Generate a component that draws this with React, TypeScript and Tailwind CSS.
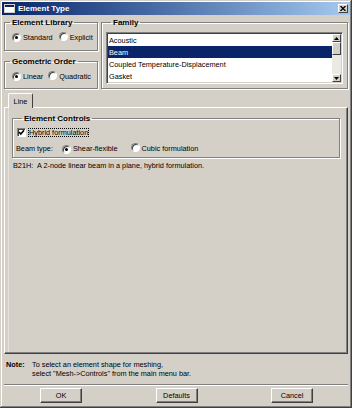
import React from 'react';

const Radio = ({ checked }: { checked?: boolean }) => (
  <span className="inline-flex w-[9px] h-[9px] shrink-0 items-center justify-center rounded-full bg-white border border-t-[#808080] border-l-[#808080] border-r-white border-b-white shadow-[inset_1px_1px_0_#404040]">
    {checked && <span className="w-[3px] h-[3px] rounded-full bg-black" />}
  </span>
);

const Checkbox = () => (
  <span className="inline-flex w-[9px] h-[9px] shrink-0 items-center justify-center bg-white border border-t-[#808080] border-l-[#808080] border-r-white border-b-white shadow-[inset_1px_1px_0_#404040]">
    <svg width="7" height="7" viewBox="0 0 7 7">
      <path d="M1 3 L2.8 5 L6 1.2" stroke="black" strokeWidth="1.6" fill="none" />
    </svg>
  </span>
);

const Group = ({ title, className, children }: { title: string; className?: string; children?: React.ReactNode }) => (
  <fieldset className={`border border-[#808080] shadow-[inset_1px_1px_0_#fff,1px_1px_0_#fff] ${className ?? ''}`}>
    <legend className="ml-[5px] px-[2px] font-bold text-[8px] leading-[9px]">{title}</legend>
    {children}
  </fieldset>
);

const Button = ({ label }: { label: string }) => (
  <button className="w-[42px] h-[15px] flex items-center justify-center bg-[#d4d0c8] border border-t-white border-l-white border-r-[#404040] border-b-[#404040] shadow-[inset_-1px_-1px_0_#808080] leading-[9px]">
    {label}
  </button>
);

const families = ['Acoustic', 'Beam', 'Coupled Temperature-Displacement', 'Gasket'];

export default function App() {
  return (
    <div className="w-[352px] h-[408px] p-[2px] flex flex-col bg-[#d4d0c8] text-black text-[7.3px] leading-[9px] font-['Liberation_Sans',Arial,sans-serif] shadow-[inset_-1px_-1px_0_#404040,inset_1px_1px_0_#d4d0c8,inset_-2px_-2px_0_#808080,inset_2px_2px_0_#ffffff]">
      {/* title bar */}
      <div className="h-[13px] flex items-center bg-gradient-to-r from-[#0a246a] to-[#a6caf0] px-[1px]">
        <svg width="11" height="9" viewBox="0 0 11 9" className="ml-[1px]">
          <rect x="0.5" y="0.5" width="10" height="8" fill="#fff" stroke="#d4d0c8" />
          <rect x="1" y="1" width="9" height="2" fill="#0a246a" />
        </svg>
        <span className="ml-[3px] text-white font-bold text-[8px]">Element Type</span>
        <span className="ml-auto mr-[1px] w-[10px] h-[9px] flex items-center justify-center bg-[#d4d0c8] border border-t-white border-l-white border-r-[#404040] border-b-[#404040]">
          <svg width="6" height="5" viewBox="0 0 6 5">
            <path d="M0.5 0 L5.5 5 M5.5 0 L0.5 5" stroke="black" strokeWidth="1.3" />
          </svg>
        </span>
      </div>

      <div className="flex-1 flex flex-col px-[2px]">
        {/* top row */}
        <div className="flex gap-[3px] mt-[3px]">
          <div className="w-[94px] flex flex-col gap-[6px]">
            <Group title="Element Library" className="h-[33px]">
              <div className="flex items-center pt-[5px] pl-[7px]">
                <Radio checked />
                <span className="ml-[2px]">Standard</span>
                <span className="ml-[6px]"><Radio /></span>
                <span className="ml-[2px]">Explicit</span>
              </div>
            </Group>
            <Group title="Geometric Order" className="h-[32px]">
              <div className="flex items-center pt-[5px] pl-[7px]">
                <Radio checked />
                <span className="ml-[2px]">Linear</span>
                <span className="ml-[5px]"><Radio /></span>
                <span className="ml-[2px]">Quadratic</span>
              </div>
            </Group>
          </div>

          <Group title="Family" className="flex-1 h-[71px] px-[4px] pt-[5px]">
            <div className="h-[52px] flex bg-white border border-t-[#808080] border-l-[#808080] border-r-white border-b-white shadow-[inset_1px_1px_0_#404040,inset_-1px_-1px_0_#d4d0c8] p-[1px]">
              <div className="flex-1 flex flex-col">
                {families.map((f) => (
                  <div
                    key={f}
                    className={`h-[12px] flex items-center pl-[1px] ${f === 'Beam' ? 'bg-[#0a246a] text-white' : ''}`}
                  >
                    {f}
                  </div>
                ))}
              </div>
              {/* scrollbar */}
              <div className="w-[9px] flex flex-col bg-[#ece9e2]">
                <div className="h-[8px] flex items-center justify-center bg-[#d4d0c8] border border-t-white border-l-white border-r-[#404040] border-b-[#404040]">
                  <svg width="5" height="3" viewBox="0 0 5 3"><path d="M2.5 0 L5 3 L0 3 Z" fill="black" /></svg>
                </div>
                <div className="h-[13px] bg-[#d4d0c8] border border-t-white border-l-white border-r-[#404040] border-b-[#404040]" />
                <div className="flex-1" />
                <div className="h-[8px] flex items-center justify-center bg-[#d4d0c8] border border-t-white border-l-white border-r-[#404040] border-b-[#404040]">
                  <svg width="5" height="3" viewBox="0 0 5 3"><path d="M0 0 L5 0 L2.5 3 Z" fill="black" /></svg>
                </div>
              </div>
            </div>
          </Group>
        </div>

        {/* tab */}
        <div className="mt-[4px] flex">
          <div className="ml-[4px] w-[25px] h-[15px] -mb-[1px] relative z-10 flex items-center justify-center bg-[#d4d0c8] border-l border-t border-white border-r border-r-[#404040] rounded-t-[2px]">
            Line
          </div>
        </div>
        <div className="flex-1 border border-t-white border-l-white border-r-[#404040] border-b-[#404040] shadow-[inset_-1px_-1px_0_#808080,inset_3px_0_0_#d4d0c8,inset_4px_0_0_#e6e3dd] px-[7px] pt-[6px]">
          <Group title="Element Controls" className="h-[44px] pl-[4px]">
            <div className="flex items-center mt-[5px]">
              <Checkbox />
              <span className="ml-[2px] px-[1px] outline outline-1 outline-dotted outline-black -outline-offset-1">Hybrid formulation</span>
            </div>
            <div className="flex items-center mt-[6px] -ml-[1px]">
              <span>Beam type:</span>
              <span className="ml-[9px]"><Radio checked /></span>
              <span className="ml-[2px]">Shear-flexible</span>
              <span className="ml-[13px]"><Radio /></span>
              <span className="ml-[2px]">Cubic formulation</span>
            </div>
          </Group>
          <div className="mt-[3px] pl-[1px]">B21H:&nbsp; A 2-node linear beam in a plane, hybrid formulation.</div>
        </div>

        {/* note */}
        <div className="h-[30px] flex pt-[6px] pl-[2px]">
          <span className="w-[26px] font-bold">Note:</span>
          <div className="flex flex-col">
            <span>To select an element shape for meshing,</span>
            <span>select "Mesh-&gt;Controls" from the main menu bar.</span>
          </div>
        </div>
        <div className="h-[2px] border-t border-t-[#808080] border-b border-b-white" />
        <div className="flex justify-between pl-[36px] pr-[35px] pt-[2px] h-[20px]">
          <Button label="OK" />
          <Button label="Defaults" />
          <Button label="Cancel" />
        </div>
      </div>
    </div>
  );
}
